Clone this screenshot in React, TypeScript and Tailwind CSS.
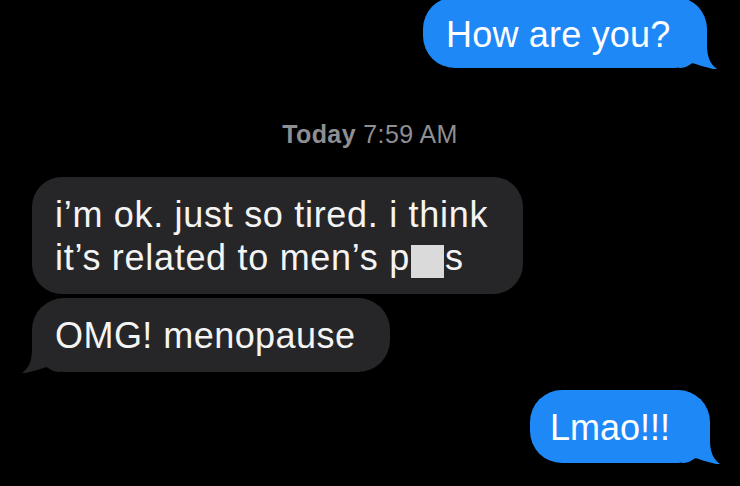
import React from "react";

const BLUE = "#1e88f7";
const GREY = "#262628";

function RightTail() {
  return (
    <svg
      className="absolute right-[-12px] bottom-[-2px]"
      width="40"
      height="36"
      viewBox="0 0 40 36"
    >
      <path
        d="M0 0 L28 0 L28 12 C28 22 31 30 38 35 C32 35.5 24 32 13 29 C10 32 5 34 0 34 Z"
        fill={BLUE}
      />
    </svg>
  );
}

function LeftTail() {
  return (
    <svg
      className="absolute left-[-12px] bottom-[-2px]"
      width="40"
      height="36"
      viewBox="0 0 40 36"
    >
      <path
        d="M40 0 L12 0 L12 12 C12 22 9 30 2 35 C8 35.5 16 32 27 29 C30 32 35 34 40 34 Z"
        fill={GREY}
      />
    </svg>
  );
}

export default function App() {
  return (
    <div
      className="w-[740px] h-[486px] overflow-hidden bg-black flex flex-col"
      style={{ fontFamily: '"Liberation Sans", Arial, sans-serif' }}
    >
      {/* outgoing top */}
      <div className="self-end mr-[33px] mt-[-3px] relative w-[284px] rounded-[32px] bg-[#1e88f7] pl-[23px] pt-[16px] pb-[12px] text-[36px] leading-[43px] text-white tracking-[0.2px] whitespace-nowrap">
        <RightTail />
        <span className="relative">How are you?</span>
      </div>

      {/* timestamp */}
      <div className="mt-[51px] text-center text-[25px] leading-[30px] text-[#8e8e93] tracking-[0.4px]">
        <span className="font-bold">Today</span> 7:59 AM
      </div>

      {/* incoming */}
      <div className="mt-[28px] ml-[32px] flex flex-col gap-[4px]">
        <div className="w-[491px] rounded-[30px] bg-[#262628] pl-[23px] pt-[16px] pb-[15px] text-[36px] leading-[43px] text-[#f4f4f4] tracking-[0.7px] whitespace-nowrap">
          i’m ok. just so tired. i think
          <br />
          it’s related to men’s p
          <span className="inline-block w-[33px] h-[33px] align-[-8px] bg-[#dadada] ml-[1px] mr-[1px]" />
          s
        </div>
        <div className="relative w-[358px] rounded-[32px] bg-[#262628] pl-[23px] pt-[16px] pb-[15px] text-[36px] leading-[43px] text-[#f4f4f4] tracking-[0.45px] whitespace-nowrap">
          <LeftTail />
          <span className="relative">OMG! menopause</span>
        </div>
      </div>

      {/* outgoing bottom */}
      <div className="self-end mr-[30px] mt-[18px] relative w-[180px] rounded-[32px] bg-[#1e88f7] pl-[20px] pt-[16px] pb-[14px] text-[36px] leading-[43px] text-white whitespace-nowrap">
        <RightTail />
        <span className="relative">Lmao!!!</span>
      </div>
    </div>
  );
}
